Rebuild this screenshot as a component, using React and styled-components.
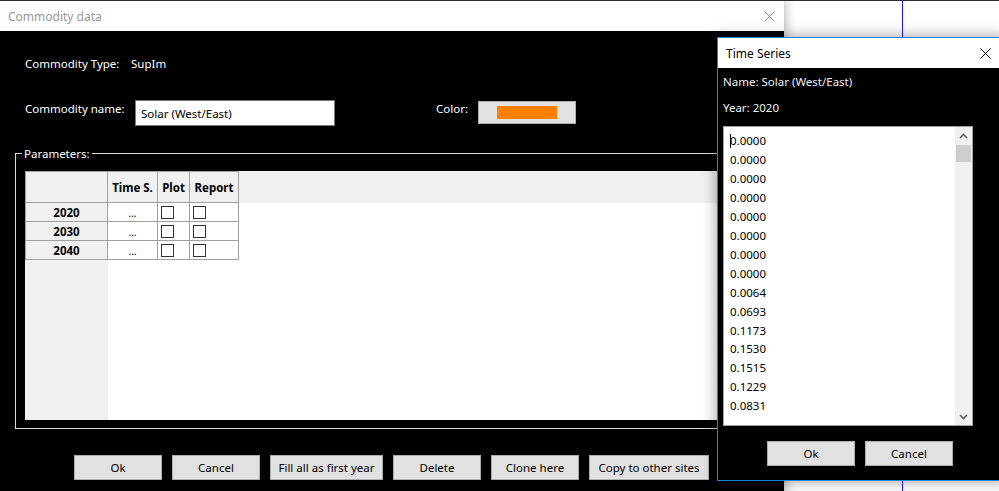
import React from "react";
import styled, { createGlobalStyle } from "styled-components";

const GlobalStyle = createGlobalStyle`
  html, body {
    margin: 0;
    padding: 0;
    background: #fff;
  }
  body {
    font-family: "Noto Sans", "Segoe UI", sans-serif;
    font-size: 11.5px;
  }
  * {
    box-sizing: border-box;
  }
`;

const years = ["2020", "2030", "2040"];
const series = [
  "0.0000", "0.0000", "0.0000", "0.0000", "0.0000", "0.0000", "0.0000", "0.0000",
  "0.0064", "0.0693", "0.1173", "0.1530", "0.1515", "0.1229", "0.0831",
];

function CloseIcon({ color }) {
  return (
    <svg width="11" height="11" viewBox="0 0 11 11">
      <path d="M0.5 0.5 L10.5 10.5 M10.5 0.5 L0.5 10.5" stroke={color} strokeWidth="1" fill="none" />
    </svg>
  );
}

function Chevron({ up }) {
  return (
    <svg width="9" height="6" viewBox="0 0 9 6">
      <path
        d={up ? "M1 5 L4.5 1.5 L8 5" : "M1 1 L4.5 4.5 L8 1"}
        stroke="#606060"
        strokeWidth="1.6"
        fill="none"
      />
    </svg>
  );
}

export default function App() {
  return (
    <>
      <GlobalStyle />
      <Desktop>
        <BlueLine />
        <MainWindow>
          <TitleBar>
            <Title $color="#999">Commodity data</Title>
            <CloseBtn $w={30}>
              <CloseIcon color="#8c8c8c" />
            </CloseBtn>
          </TitleBar>
          <Body>
            <InfoRow $top={23}>
              <Label $w={106} $lh={20}>Commodity Type:</Label>
              <Label $lh={20}>SupIm</Label>
            </InfoRow>
            <InfoRow $top={26}>
              <Label $w={110} $lh={18}>Commodity name:</Label>
              <TextBox>Solar (West/East)</TextBox>
              <Label $w={42} $lh={18} style={{ marginLeft: 101 }}>Color:</Label>
              <ColorButton>
                <Swatch />
              </ColorButton>
            </InfoRow>
            <GroupBox>
              <Legend>Parameters:</Legend>
              <Grid>
                <Corner />
                <HeaderStrip>
                  <HeadCell $w={50}>Time S.</HeadCell>
                  <HeadCell $w={32}>Plot</HeadCell>
                  <HeadCell $w={49}>Report</HeadCell>
                </HeaderStrip>
                <RowHeads>
                  {years.map((y) => (
                    <RowHead key={y}>{y}</RowHead>
                  ))}
                </RowHeads>
                <Cells>
                  {years.map((y) => (
                    <DataRow key={y}>
                      <Cell $w={50} $center>
                        <Dots>...</Dots>
                      </Cell>
                      <Cell $w={32}>
                        <CheckBox />
                      </Cell>
                      <Cell $w={49}>
                        <CheckBox />
                      </Cell>
                    </DataRow>
                  ))}
                </Cells>
              </Grid>
            </GroupBox>
            <ButtonRow>
              <Button $w={88}>Ok</Button>
              <Button $w={88}>Cancel</Button>
              <Button $w={113}>Fill all as first year</Button>
              <Button $w={88}>Delete</Button>
              <Button $w={88}>Clone here</Button>
              <Button $w={120}>Copy to other sites</Button>
            </ButtonRow>
          </Body>
        </MainWindow>

        <SeriesWindow>
          <TitleBar>
            <Title $color="#000">Time Series</Title>
            <CloseBtn $w={46}>
              <CloseIcon color="#000" />
            </CloseBtn>
          </TitleBar>
          <SeriesBody>
            <SeriesLine>Name: Solar (West/East)</SeriesLine>
            <SeriesLine style={{ marginTop: 8 }}>Year: 2020</SeriesLine>
            <ListBox>
              <ListLines>
                {series.map((v, i) => (
                  <ListLine key={i}>
                    {i === 0 && <Caret />}
                    {v}
                  </ListLine>
                ))}
              </ListLines>
              <ScrollTrack>
                <ArrowBox>
                  <Chevron up />
                </ArrowBox>
                <Thumb />
                <ArrowBox style={{ marginTop: "auto" }}>
                  <Chevron />
                </ArrowBox>
              </ScrollTrack>
            </ListBox>
            <SeriesButtons>
              <Button $w={88}>Ok</Button>
              <Button $w={88}>Cancel</Button>
            </SeriesButtons>
          </SeriesBody>
        </SeriesWindow>
      </Desktop>
    </>
  );
}

const Desktop = styled.div`
  position: relative;
  width: 999px;
  height: 491px;
  overflow: hidden;
  background: #fff;
  border-top: 1px solid #2d2d2d;
`;

const BlueLine = styled.div`
  position: absolute;
  left: 902px;
  top: 0;
  bottom: 0;
  width: 1px;
  background: #1a1aff;
`;

const MainWindow = styled.div`
  position: relative;
  width: 784px;
  height: 520px;
  display: flex;
  flex-direction: column;
  box-shadow: 2px 0 10px rgba(0, 0, 0, 0.28);
`;

const TitleBar = styled.div`
  height: 30px;
  flex: none;
  display: flex;
  align-items: center;
  justify-content: space-between;
  background: #fff;
  padding-left: 8px;
`;

const Title = styled.span`
  color: ${(p) => p.$color};
  font-size: 12px;
`;

const CloseBtn = styled.div`
  width: ${(p) => p.$w}px;
  height: 30px;
  display: flex;
  align-items: center;
  justify-content: center;
`;

const Body = styled.div`
  flex: 1;
  background: #000;
  color: #fff;
  padding: 0 14px 0 15px;
  display: flex;
  flex-direction: column;
`;

const InfoRow = styled.div`
  display: flex;
  align-items: flex-start;
  padding-left: 10px;
  margin-top: ${(p) => p.$top}px;
`;

const Label = styled.span`
  width: ${(p) => (p.$w ? `${p.$w}px` : "auto")};
  line-height: ${(p) => p.$lh}px;
  white-space: nowrap;
`;

const TextBox = styled.div`
  width: 200px;
  height: 26px;
  border: 1px solid #7a7a7a;
  background: #fff;
  color: #000;
  padding-left: 5px;
  display: flex;
  align-items: center;
`;

const ColorButton = styled.div`
  width: 98px;
  height: 23px;
  margin-top: 1px;
  background: #e1e1e1;
  border: 1px solid #adadad;
  display: flex;
  align-items: center;
  justify-content: center;
`;

const Swatch = styled.div`
  width: 60px;
  height: 13px;
  background: #ff8000;
`;

const GroupBox = styled.fieldset`
  margin: 20px 0 0 0;
  min-width: 0;
  border: 1px solid #dcdcdc;
  padding: 10px 9px 8px 9px;
`;

const Legend = styled.legend`
  padding: 0 2px;
  margin-left: -3px;
  line-height: 15px;
  color: #fff;
`;

const Grid = styled.div`
  display: grid;
  grid-template-columns: 83px 1fr;
  grid-template-rows: 32px 1fr;
  height: 249px;
  background: #fff;
  color: #000;
`;

const Corner = styled.div`
  background: #f0f0f0;
  border: 1px solid #a0a0a0;
`;

const HeaderStrip = styled.div`
  background: #f0f0f0;
  display: flex;
`;

const HeadCell = styled.div`
  width: ${(p) => p.$w}px;
  height: 32px;
  border: 1px solid #a0a0a0;
  border-width: 1px 1px 1px 0;
  display: flex;
  align-items: center;
  justify-content: center;
  font-weight: bold;
`;

const RowHeads = styled.div`
  background: #f0f0f0;
  display: flex;
  flex-direction: column;
`;

const RowHead = styled.div`
  height: 19px;
  border: 1px solid #a0a0a0;
  border-width: 0 1px 1px 1px;
  display: flex;
  align-items: center;
  justify-content: center;
  font-weight: bold;
`;

const Cells = styled.div`
  display: flex;
  flex-direction: column;
`;

const DataRow = styled.div`
  display: flex;
  height: 19px;
`;

const Cell = styled.div`
  width: ${(p) => p.$w}px;
  border: 1px solid #a0a0a0;
  border-width: 0 1px 1px 0;
  display: flex;
  align-items: center;
  justify-content: ${(p) => (p.$center ? "center" : "flex-start")};
  padding-left: ${(p) => (p.$center ? 0 : 3)}px;
`;

const Dots = styled.span`
  font-size: 10px;
  line-height: 12px;
  margin-top: 2px;
`;

const CheckBox = styled.div`
  width: 13px;
  height: 13px;
  border: 1px solid #333;
  background: #fff;
`;

const ButtonRow = styled.div`
  display: flex;
  gap: 10px;
  margin-top: 26px;
  padding-left: 59px;
`;

const Button = styled.button`
  width: ${(p) => p.$w}px;
  height: 25px;
  padding: 0;
  background: #e1e1e1;
  border: 1px solid #adadad;
  color: #000;
  font-family: inherit;
  font-size: 11.5px;
`;

const SeriesWindow = styled.div`
  position: absolute;
  left: 717px;
  top: 36px;
  width: 292px;
  height: 444px;
  border: 1px solid #1883d7;
  box-shadow: 0 0 14px rgba(0, 0, 0, 0.4);
  display: flex;
  flex-direction: column;
`;

const SeriesBody = styled.div`
  flex: 1;
  background: #000;
  color: #f0f0f0;
  padding: 5px 5px 0;
  display: flex;
  flex-direction: column;
`;

const SeriesLine = styled.div`
  line-height: 18px;
  white-space: nowrap;
`;

const ListBox = styled.div`
  margin-top: 9px;
  width: 250px;
  height: 300px;
  border: 1px solid #a0a0a0;
  background: #fff;
  display: flex;
`;

const ListLines = styled.div`
  flex: 1;
  padding: 5px 0 0 6px;
  overflow: hidden;
  color: #000;
`;

const ListLine = styled.div`
  line-height: 18.95px;
`;

const Caret = styled.span`
  display: inline-block;
  width: 1px;
  height: 14px;
  background: #000;
  margin-right: -1px;
  vertical-align: -3px;
`;

const ScrollTrack = styled.div`
  width: 17px;
  background: #f0f0f0;
  display: flex;
  flex-direction: column;
  align-items: center;
`;

const ArrowBox = styled.div`
  width: 17px;
  height: 17px;
  display: flex;
  align-items: center;
  justify-content: center;
`;

const Thumb = styled.div`
  width: 15px;
  height: 17px;
  margin-top: 1px;
  background: #cdcdcd;
`;

const SeriesButtons = styled.div`
  display: flex;
  gap: 10px;
  margin-top: 15px;
  padding-left: 44px;
`;
